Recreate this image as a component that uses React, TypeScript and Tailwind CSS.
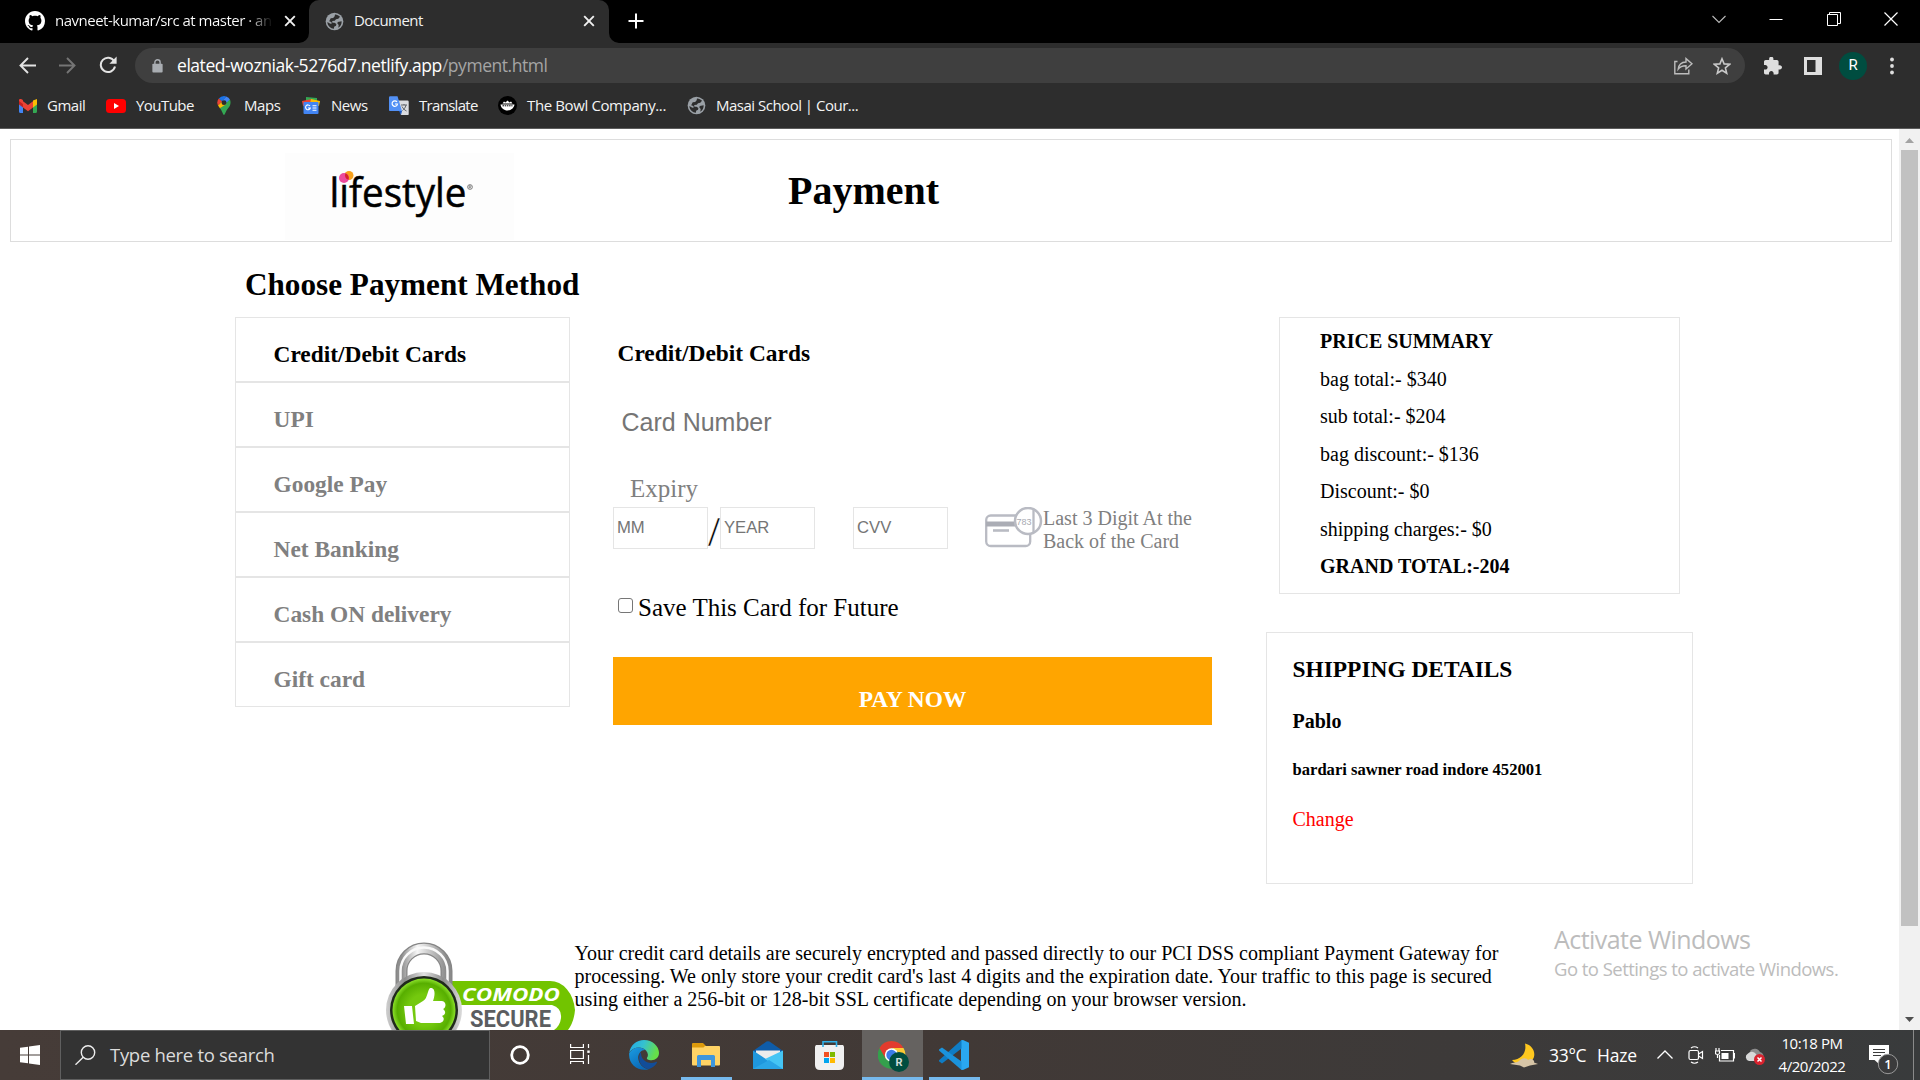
import type { ReactNode } from "react";

const ui = "font-['Open_Sans','Noto_Sans',sans-serif]";

function GlobeIcon() {
  return (
    <svg viewBox="0 0 20 20" className="h-[19px] w-[19px] shrink-0">
      <circle cx="10" cy="10" r="9.3" fill="#9aa0a6" />
      <path d="M10.5 2.6C12 2.4 14.8 3.6 15.8 5.1L14 7.2 11.6 7.6 10.3 9.2 7.6 9.6 7.8 11.4 10 11.2 12 12.6 11.6 14.6 9.6 15.6 9.4 17.6C6 17.6 2.6 14.8 2.5 10.6L5.6 12.4 7.2 12 6.6 10.4 4.4 9.8 6 6.6 8.6 6.2 10.2 4.6ZM13.4 10.4 17.5 9.8C17.8 12.4 16.4 15.2 14 16.6L14.4 13.6 13 12.2Z" fill="#2d2d2d" />
    </svg>
  );
}

function CloseX() {
  return (
    <svg viewBox="0 0 12 12" className="h-3 w-3 shrink-0" stroke="#f1f1f1" strokeWidth="1.9">
      <path d="M1.2 1.2 10.8 10.8M10.8 1.2 1.2 10.8" />
    </svg>
  );
}

function TabStrip() {
  return (
    <div className="flex h-[43px] w-full bg-black text-[15px] text-[#f1f1f1]">
      <div className="flex w-[309px] items-center pb-px pl-[25px]">
        <svg viewBox="0 0 16 16" className="h-5 w-5 shrink-0" fill="#fff">
          <path d="M8 0C3.58 0 0 3.58 0 8c0 3.54 2.29 6.53 5.47 7.59.4.07.55-.17.55-.38 0-.19-.01-.82-.01-1.49-2.01.37-2.53-.49-2.69-.94-.09-.23-.48-.94-.82-1.13-.28-.15-.68-.52-.01-.53.63-.01 1.08.58 1.23.82.72 1.21 1.87.87 2.33.66.07-.52.28-.87.51-1.07-1.78-.2-3.64-.89-3.64-3.95 0-.87.31-1.59.82-2.15-.08-.2-.36-1.02.08-2.12 0 0 .67-.21 2.2.82.64-.18 1.32-.27 2-.27s1.36.09 2 .27c1.53-1.04 2.2-.82 2.2-.82.44 1.1.16 1.92.08 2.12.51.56.82 1.27.82 2.15 0 3.07-1.87 3.75-3.65 3.95.29.25.54.73.54 1.48 0 1.07-.01 1.93-.01 2.2 0 .21.15.46.55.38A8.01 8.01 0 0 0 16 8c0-4.42-3.58-8-8-8Z" />
        </svg>
        <div className="ml-[10px] w-[218px] overflow-hidden whitespace-nowrap bg-gradient-to-r from-white from-88% to-transparent bg-clip-text pb-[2px] tracking-[-0.5px] text-transparent">
          navneet-kumar/src at master · an
        </div>
        <div className="ml-[11px]"><CloseX /></div>
      </div>
      <div className="relative flex w-[300px] items-center rounded-t-[10px] bg-[#2d2d2d] pb-px pl-4">
        <svg viewBox="0 0 10 10" className="absolute -left-[10px] bottom-0 h-[10px] w-[10px]"><path d="M10 0V10H0A10 10 0 0 0 10 0Z" fill="#2d2d2d" /></svg>
        <svg viewBox="0 0 10 10" className="absolute -right-[10px] bottom-0 h-[10px] w-[10px]"><path d="M0 0V10H10A10 10 0 0 1 0 0Z" fill="#2d2d2d" /></svg>
        <GlobeIcon />
        <div className="ml-[10px] w-[219px] pb-[2px] tracking-[-0.55px]">Document</div>
        <div className="ml-[10px]"><CloseX /></div>
      </div>
      <div className="flex flex-1 items-center pb-px pl-[19px]">
        <svg viewBox="0 0 16 16" className="h-4 w-4" stroke="#fff" strokeWidth="2"><path d="M8 .5V15.5M.5 8H15.5" /></svg>
      </div>
      <div className="flex h-[37px] w-[229px] items-center justify-between pl-[21px] pr-[22px]">
        <svg viewBox="0 0 14 14" className="h-[14px] w-[14px]" fill="none" stroke="#bbb" strokeWidth="1.1"><path d="M.5 4 7 10.500 13.500 4" /></svg>
        <svg viewBox="0 0 14 14" className="h-[14px] w-[14px]" stroke="#fff"><path d="M.5 7.500H13.500" /></svg>
        <svg viewBox="0 0 14 14" className="h-[14px] w-[14px]" fill="none" stroke="#fff"><path d="M.5 2.500H10.500V13.500H.5ZM2.500 2.500V.5H13.500V11.500H10.500" /></svg>
        <svg viewBox="0 0 14 14" className="h-[14px] w-[14px]" stroke="#fff" strokeWidth="1.2"><path d="M.5.5 13.500 13.500M13.500.5.5 13.500" /></svg>
      </div>
    </div>
  );
}

function Toolbar() {
  return (
    <div className="flex h-[45px] w-full items-center bg-[#2d2d2d]">
      <div className="flex w-[135px] items-center pb-px pl-[19px]">
        <svg viewBox="0 0 17 17" className="h-[17px] w-[17px]" fill="none" stroke="#e3e3e3" strokeWidth="1.9"><path d="M17 8.500H1.800M9 1 1.500 8.500 9 16" /></svg>
        <svg viewBox="0 0 17 17" className="ml-[23px] h-[17px] w-[17px]" fill="none" stroke="#757575" strokeWidth="1.9"><path d="M0 8.500H15.200M8 1 15.500 8.500 8 16" /></svg>
        <svg viewBox="0 0 18 18" className="ml-[23px] h-[18px] w-[18px]"><path d="M15.200 5.200A7.200 7.200 0 1 0 16 10.600" fill="none" stroke="#e3e3e3" strokeWidth="2" /><path d="M17.600.6V7.800H10.400Z" fill="#e3e3e3" /></svg>
      </div>
      <div className="flex h-[35px] w-[1610px] items-center rounded-full bg-[#3f3f3f] pl-[17px]">
        <svg viewBox="0 0 11 15" className="h-[14px] w-[11px]"><rect y="5" width="11" height="9.500" rx="1" fill="#a9adb2" /><path d="M2.700 6V3.600a2.800 2.800 0 0 1 5.600 0V6" fill="none" stroke="#a9adb2" strokeWidth="1.500" /></svg>
        <div className="ml-[14px] flex-1 whitespace-nowrap pb-[2px] text-[17.5px] leading-[24px] tracking-[-0.45px] text-white">
          elated-wozniak-5276d7.netlify.app<span className="text-[#a5a5a5]">/pyment.html</span>
        </div>
        <svg viewBox="0 0 19 18" className="h-[18px] w-[19px]" fill="none" stroke="#bdbdbd" strokeWidth="1.400"><path d="M3.500 4.500H.8V16.800H14.800V12.500M4.200 12.200C4.600 8 7.500 5.200 12 5V1.600L18 6.800 12 12V8.800C8.500 8.700 6 9.800 4.200 12.200Z" /></svg>
        <svg viewBox="0 0 18 18" className="ml-[20px] mr-[14px] h-[18px] w-[18px]" fill="none" stroke="#c8c8c8" strokeWidth="1.600"><path d="M9 1.800 11.100 6.900 16.600 7.300 12.400 10.900 13.700 16.200 9 13.300 4.300 16.200 5.600 10.900 1.400 7.300 6.900 6.900Z" /></svg>
      </div>
      <svg viewBox="2 1.5 21 21" className="ml-[19px] h-[18px] w-[18px]" fill="#dedede"><path d="M20.500 11H19V7c0-1.100-.9-2-2-2h-4V3.500C13 2.120 11.880 1 10.500 1S8 2.120 8 3.500V5H4c-1.100 0-1.990.9-1.990 2v3.800H3.500c1.490 0 2.700 1.210 2.700 2.700s-1.210 2.700-2.700 2.700H2V20c0 1.100.9 2 2 2h3.800v-1.500c0-1.490 1.210-2.700 2.700-2.700 1.490 0 2.700 1.210 2.700 2.700V22H17c1.100 0 2-.9 2-2v-4h1.500c1.380 0 2.500-1.120 2.500-2.500S21.880 11 20.500 11z" /></svg>
      <svg viewBox="0 0 18 18" className="ml-[22px] h-[18px] w-[18px]"><path fillRule="evenodd" d="M0 0H18V18H0ZM3 3V15H11.500V3Z" fill="#dedede" /></svg>
      <div className="ml-[17px] flex h-7 w-7 items-center justify-center rounded-full bg-[#004d40] font-['Roboto',sans-serif] text-[15px] text-white">R</div>
      <svg viewBox="0 0 4 18" className="ml-[23px] h-[18px] w-1" fill="#dedede"><circle cx="2" cy="2.500" r="1.900" /><circle cx="2" cy="9" r="1.900" /><circle cx="2" cy="15.500" r="1.900" /></svg>
    </div>
  );
}

const bookmarks: { label: string; box: string; icon: ReactNode }[] = [
  {
    label: "Gmail", box: "w-[87px] gap-[10px] tracking-[-0.5px]",
    icon: <svg viewBox="0 0 18 14" className="h-[14px] w-[18px]"><path d="M0 2V12.500A1.500 1.500 0 0 0 1.500 14H4V5Z" fill="#4285f4" /><path d="M18 2V12.500A1.500 1.500 0 0 1 16.500 14H14V5Z" fill="#34a853" /><path d="M14 1.500 18 0V5.500L14 8.500Z" fill="#fbbc04" /><path d="M4 1.500 0 0V5.500L4 8.500Z" fill="#c5221f" /><path d="M4 8.500V2.300L9 6 14 2.300V8.500L9 12.200ZM0 2C0 0 2-.5 3.300.6L4 1.500V5Z" fill="#ea4335" /></svg>,
  },
  {
    label: "YouTube", box: "w-[107px] gap-[10px] tracking-[-0.55px]",
    icon: <svg viewBox="0 0 20 14" className="h-[14px] w-[20px]"><rect width="20" height="14" rx="3.500" fill="red" /><path d="M8 4 13 7 8 10Z" fill="#fff" /></svg>,
  },
  {
    label: "Maps", box: "w-[89px] pl-1 gap-[13px] tracking-[-0.45px]",
    icon: <svg viewBox="0 0 14 20" className="h-[19px] w-[14px]"><path d="M7 0A7 7 0 0 0 1.500 2.700L5 5.700 9.300.4A7 7 0 0 0 7 0Z" fill="#1a73e8" /><path d="M1.500 2.700A7 7 0 0 0 .7 10L5 5.700Z" fill="#ea4335" /><path d="M9.300.4 4.900 5.600 9 9 13.300 3.800A7 7 0 0 0 9.300.4Z" fill="#4285f4" /><path d="M13.300 3.800 2.700 13C5 15.500 6 20 7 20S9 15.500 11.300 13 14.600 7 13.300 3.800Z" fill="#34a853" /><path d="M.7 10 5 5.700 9.500 8.500 2.700 13Z" fill="#fbbc04" /><circle cx="7" cy="7" r="2.600" fill="#2d2d2d" /></svg>,
  },
  {
    label: "News", box: "w-[87px] gap-[11px] tracking-[-0.45px]",
    icon: <svg viewBox="0 0 18 17" className="h-[17px] w-[18px]"><path d="M4 0 15 1V6H4Z" fill="#34a853" /><path d="M0 4 10 2 11 7 1 9Z" fill="#ea4335" /><path d="M18 4 9 2 8 7 17 9Z" fill="#fbbc04" /><rect x="1.500" y="5" width="15" height="12" rx="1" fill="#4285f4" /><path d="M8 9A2.400 2.400 0 1 0 8.300 11H6M10.500 8.800H14.500M10.500 11H14.500M10.500 13.300H14.500" stroke="#fff" strokeWidth="1.100" fill="none" /></svg>,
  },
  {
    label: "Translate", box: "w-[109px] gap-[10px] tracking-[-0.7px]",
    icon: <svg viewBox="0 0 20 19" className="h-[19px] w-[20px]"><path d="M8 4.500H18.500A1.200 1.200 0 0 1 19.700 5.700V18A1 1 0 0 1 18.500 19H12Z" fill="#dadce0" /><path d="M1.200.3H8.500L13 15H1.200A1 1 0 0 1 0 14V1.500A1.200 1.200 0 0 1 1.200.3Z" fill="#5290f5" /><path d="M10 15H13L12 19Z" fill="#1a57c0" /><path d="M8 6A2.700 2.700 0 1 0 8.500 8H6" stroke="#fff" strokeWidth="1.200" fill="none" /><path d="M12 9H18M15 8V9M17 9C16.500 12 14.500 13.500 13.500 14.500M13 10.500C14 12.500 15.500 14 17.500 15" stroke="#5f6368" fill="none" /></svg>,
  },
  {
    label: "The Bowl Company...", box: "w-[189px] gap-[10px] tracking-[-0.38px]",
    icon: <svg viewBox="0 0 19 19" className="h-[19px] w-[19px]"><circle cx="9.500" cy="9.500" r="9.500" fill="#000" /><path d="M2.500 8.500H16.500C16 12 13 14.500 9.500 14.500S3 12 2.500 8.500ZM4.500 7.500 6 5.500 7.500 6.500 9.500 4.500 11.500 6.500 13 5.500 14.500 7.500Z" fill="#fff" /><path d="M4.500 9.800H14.500" stroke="#000" strokeDasharray="1.500 .7" /></svg>,
  },
  { label: "Masai School | Cour...", box: "gap-[10px] tracking-[-0.5px]", icon: <GlobeIcon /> },
];

function BookmarkBar() {
  return (
    <div className="flex h-[41px] w-full items-center border-b border-[#5c5c5c] bg-[#2d2d2d] pb-[5px] pl-[19px] text-[15px] text-[#f4f4f4]">
      {bookmarks.map((b) => (
        <div key={b.label} className={"flex shrink-0 items-center whitespace-nowrap " + b.box}>
          <span className="shrink-0">{b.icon}</span>
          <span className="pb-px">{b.label}</span>
        </div>
      ))}
    </div>
  );
}

function LifestyleLogo() {
  return (
    <svg viewBox="0 0 229 87" className="h-[87px] w-[229px] bg-[#fdfdfd]">
      <text x="44.500" y="53.500" fontSize="40" textLength="137" lengthAdjust="spacingAndGlyphs" fontFamily="Open Sans" fill="#000" stroke="#000" strokeWidth=".5">lifestyle</text>
      <rect x="55" y="18" width="10" height="12" fill="#fdfdfd" />
      <circle cx="64" cy="22.500" r="4.500" fill="#f9a11b" />
      <circle cx="59" cy="25" r="5" fill="#ec4a9c" />
      <path d="M60.500 20.300A4.500 4.500 0 0 0 63.500 26.800 5 5 0 0 0 60.500 20.300Z" fill="#d8232a" />
      <circle cx="185" cy="34" r="2.400" fill="none" stroke="#555" strokeWidth=".7" />
      <path d="M184.200 35.500V32.700H185.200A.7.700 0 0 1 185.200 34.200H184.200M185.200 34.200 186 35.500" fill="none" stroke="#444" strokeWidth=".5" />
    </svg>
  );
}

const methods = ["Credit/Debit Cards", "UPI", "Google Pay", "Net Banking", "Cash ON delivery", "Gift card"];

function MethodList() {
  return (
    <div className="w-[335px]">
      <h2 className="ml-[10px] whitespace-nowrap text-[31.2px] font-bold leading-[34px]">Choose Payment Method</h2>
      <ul className="mt-[15px]">
        {methods.map((m, i) => (
          <li key={m} className={"h-[65px] border border-[#e5e5e5] pl-[37.5px] pt-[23px] text-[23.4px] font-bold leading-[27px] " + (i === 0 ? "text-black" : "text-[#808080]")}>
            {m}
          </li>
        ))}
      </ul>
    </div>
  );
}

function Field({ hint }: { hint: string }) {
  return (
    <input
      placeholder={hint}
      className="h-[42px] w-[95px] rounded-none border border-[#e5e5e5] px-[3px] pb-[1px] font-['Liberation_Sans',Arial,sans-serif] text-[16.67px] leading-[19px] placeholder:text-[#757575]"
    />
  );
}

function CardForm() {
  return (
    <div className="w-[599px] pt-[72px]">
      <h3 className="ml-[4.5px] text-[23.4px] font-bold leading-[27px]">Credit/Debit Cards</h3>
      <input placeholder="Card Number" className="ml-[8.5px] mt-[41px] block h-[28px] w-[400px] font-['Liberation_Sans',Arial,sans-serif] text-[25px] leading-[28px] placeholder:text-[#757575]" />
      <div className="ml-[17px] mt-[39px] text-[25px] leading-[28px] text-[#808080]">Expiry</div>
      <div className="mt-[4px] flex h-[42px]">
        <Field hint="MM" />
        <div className="flex h-[42px] w-3 justify-center pt-px text-[43px] leading-[48px] [-webkit-text-stroke:0.3px_white]">/</div>
        <Field hint="YEAR" />
        <div className="w-[38px]" />
        <Field hint="CVV" />
        <svg viewBox="0 0 58 42" className="ml-[37px] h-[42px] w-[58px]" fill="none" stroke="#b9bbc3">
          <rect x="1.200" y="8.500" width="44" height="30.500" rx="4.500" strokeWidth="2.300" />
          <path d="M1 17H33" strokeWidth="5" stroke="#abadb5" />
          <path d="M8 23.500H24" strokeWidth="2.600" />
          <circle cx="43" cy="14" r="13" fill="#fff" strokeWidth="2.500" />
          <path d="M48.500 2.500V25.500" strokeWidth="2.300" />
          <text x="31.500" y="17.500" fontSize="9" stroke="none" fill="#a8aab2" fontFamily="Liberation Sans">783</text>
        </svg>
        <div className="whitespace-nowrap text-[20px] leading-[23px] text-[#808080]">Last 3 Digit At the<br />Back of the Card</div>
      </div>
      <label className="ml-[5px] mt-[45px] flex h-[28px] items-start text-[25px] leading-[28px]">
        <span className="mr-[5px] mt-[4px] h-[15px] w-[15px] rounded-[3px] border border-[#767676] bg-white" />
        Save This Card for Future
      </label>
      <button className="mt-[35px] flex h-[68px] w-[599px] items-start justify-center bg-[#ffa500] pt-[29px] text-[23.4px] font-bold leading-[27px] text-white">PAY NOW</button>
    </div>
  );
}

function Summary() {
  return (
    <div className="w-[427px] pt-[49px]">
      <div className="ml-[13px] h-[277px] w-[401px] border border-[#e5e5e5] pl-[40px] pt-[5.4px] text-[20px] leading-[37.5px]">
        <p className="font-bold">PRICE SUMMARY</p>
        <p>bag total:- $340</p>
        <p>sub total:- $204</p>
        <p>bag discount:- $136</p>
        <p>Discount:- $0</p>
        <p>shipping charges:- $0</p>
        <p className="font-bold">GRAND TOTAL:-204</p>
      </div>
      <div className="mt-[38px] h-[252px] border border-[#e5e5e5] pl-[25.5px] pt-[23px] text-[20px] leading-[23px]">
        <h3 className="text-[23.4px] font-bold leading-[27px]">SHIPPING DETAILS</h3>
        <h4 className="mt-[27px] font-bold">Pablo</h4>
        <h5 className="mt-[27px] text-[16.6px] font-bold leading-[19px]">bardari sawner road indore 452001</h5>
        <p className="mt-[29px] text-[#f00]">Change</p>
      </div>
    </div>
  );
}

function ComodoBadge() {
  return (
    <svg viewBox="0 0 189 88" className="h-[88px] w-[189px] shrink-0">
      <defs>
        <linearGradient id="steel" x1="0" x2="1"><stop offset="0" stopColor="#8e8e8e" /><stop offset=".35" stopColor="#f6f6f6" /><stop offset=".65" stopColor="#c4c4c4" /><stop offset="1" stopColor="#8a8a8a" /></linearGradient>
        <linearGradient id="rim" x1="0" x2="1"><stop offset="0" stopColor="#cfcfcf" /><stop offset=".25" stopColor="#8d8d8d" /><stop offset=".5" stopColor="#e2e2e2" /><stop offset=".75" stopColor="#8d8d8d" /><stop offset="1" stopColor="#dcdcdc" /></linearGradient>
        <radialGradient id="leaf"><stop offset=".5" stopColor="#74c90e" /><stop offset=".85" stopColor="#57ae00" /><stop offset="1" stopColor="#8be02a" /></radialGradient>
      </defs>
      <path d="M60 39H164A25 32 0 0 1 189 68Q188 80 182 88H60Z" fill="#72c400" />
      <path d="M60 63H166Q176 66 175 76 174 84 168 88H60Z" fill="#fff" />
      <path d="M15.500 46V29A22.500 22.500 0 0 1 60.500 29V46" fill="none" stroke="#858585" strokeWidth="12" />
      <path d="M15.500 46V29A22.500 22.500 0 0 1 60.500 29V46" fill="none" stroke="url(#steel)" strokeWidth="9.500" />
      <path d="M14.500 46V29A23.500 23.500 0 0 1 61.500 29V46" fill="none" stroke="#fafafa" strokeWidth="2.500" />
      <circle cx="38" cy="68" r="38" fill="url(#rim)" />
      <circle cx="38" cy="68" r="34" fill="#202a1c" />
      <circle cx="38" cy="68" r="31.500" fill="url(#leaf)" />
      <path d="M18 64H26L28 82H20ZM29 64 37 59C42 56 41 49 44 46 50 45 49 54 47 59H56C61 60 60 66 57 67 60 69 60 73 56 74 59 76 58 80 54 81H35L30 79Z" fill="#fff" />
      <text x="76" y="58.500" fontSize="18" fontWeight="bold" fontStyle="italic" textLength="98" lengthAdjust="spacingAndGlyphs" fontFamily="Open Sans" fill="#fff">COMODO</text>
      <text x="84" y="85" fontSize="24" fontWeight="bold" textLength="81" lengthAdjust="spacingAndGlyphs" fontFamily="Roboto" fill="#5b5d60">SECURE</text>
    </svg>
  );
}

function PageBody() {
  return (
    <div className="flex h-[901px] w-full overflow-hidden bg-white font-['Liberation_Serif','Times_New_Roman',serif] text-black">
      <div className="w-[1899px]">
        <header className="ml-[10px] mt-[10px] flex h-[103px] w-[1882px] border border-[#ddd]">
          <div className="ml-[274px] mt-[13px] w-[229px]"><LifestyleLogo /></div>
          <h1 className="ml-[274px] mt-[28px] text-[40px] font-bold leading-[46px]">Payment</h1>
        </header>
        <main className="flex h-[674px] pl-[235px] pt-[26px]">
          <MethodList />
          <div className="ml-[43px]"><CardForm /></div>
          <div className="ml-[54px]"><Summary /></div>
        </main>
        <footer className="mt-[26px] flex pl-[386px]">
          <ComodoBadge />
          <p className="-ml-[0.4px] w-[940px] text-[20px] leading-[23px]">
            Your credit card details are securely encrypted and passed directly to our PCI DSS compliant Payment Gateway for<br />
            processing. We only store your credit card's last 4 digits and the expiration date. Your traffic to this page is secured<br />
            using either a 256-bit or 128-bit SSL certificate depending on your browser version.
          </p>
        </footer>
      </div>
      <div className="flex w-[21px] flex-col items-center bg-[#f1f1f1]">
        <svg viewBox="0 0 9 5" className="mt-[9px] h-[5px] w-[9px]"><path d="M0 5 4.500 0 9 5Z" fill="#a3a3a3" /></svg>
        <div className="mt-[7px] h-[776px] w-[17px] bg-[#c1c1c1]" />
        <svg viewBox="0 0 9 5" className="mt-[91px] h-[5px] w-[9px]"><path d="M0 0 4.500 5 9 0Z" fill="#505050" /></svg>
      </div>
    </div>
  );
}

function TaskCell({ box, active, children }: { box: string; active?: boolean; children: ReactNode }) {
  return (
    <div className={"relative flex h-[50px] shrink-0 items-center justify-center " + box}>
      {children}
      {active && <div className="absolute inset-x-0 bottom-0 mx-auto h-[3px] w-[51px] bg-[#76b9ed]" />}
    </div>
  );
}

function Taskbar() {
  return (
    <div className="flex h-[50px] w-full bg-gradient-to-r from-[#463c38] via-[#413936] to-[#393b3c] text-white">
      <div className="flex w-[60px] items-center justify-center">
        <svg viewBox="0 0 20 20" className="h-5 w-5" fill="#fff"><path d="M0 2.800 8 1.700V9.500H0ZM9 1.500 20 0V9.500H9ZM0 10.500H8V18.300L0 17.200ZM9 10.500H20V20L9 18.500Z" /></svg>
      </div>
      <div className="flex h-[50px] w-[430px] items-center border border-[#5f5f5f] bg-[#333] pl-[14px]">
        <svg viewBox="0 0 21 20" className="h-5 w-[21px]" fill="none" stroke="#eee" strokeWidth="1.400"><circle cx="13" cy="7.500" r="6.700" /><path d="M8.200 12.300.5 19.700" /></svg>
        <div className="ml-[14px] whitespace-nowrap pb-px text-[18.5px] tracking-[-0.3px] text-[#dcdcdc]">Type here to search</div>
      </div>
      <TaskCell box="w-[60px]"><svg viewBox="0 0 20 20" className="h-5 w-5"><circle cx="10" cy="10" r="8.300" fill="none" stroke="#fff" strokeWidth="2.800" /></svg></TaskCell>
      <TaskCell box="w-[60px] pb-0.5"><svg viewBox="0 0 20 20" className="h-5 w-5" fill="none" stroke="#fff" strokeWidth="1.200"><path d="M.6 0V3.500H13.400V0M.6 6.500H13.400V14.500H.6ZM.6 20V17.500H13.400V20M18.500 0V4M18.500 11V20" /><rect x="17.300" y="6.500" width="2.400" height="2.400" fill="#fff" stroke="none" /></svg></TaskCell>
      <TaskCell box="ml-[2px] w-[63px]">
        <svg viewBox="0 0 30 30" className="h-[30px] w-[30px]">
          <defs>
            <linearGradient id="e1" x1="0" y1="0" x2="1" y2=".3"><stop offset="0" stopColor="#1fa7e8" /><stop offset=".5" stopColor="#35c1d0" /><stop offset="1" stopColor="#66df48" /></linearGradient>
            <linearGradient id="e2" x1="0" y1="0" x2=".6" y2="1"><stop offset="0" stopColor="#1b9de2" /><stop offset="1" stopColor="#0a67b5" /></linearGradient>
          </defs>
          <path d="M.3 12.500C1.500 5 7.500 0 15 0 23.500 0 30 6.300 30 12.800 30 17.500 26.500 20.300 22.500 20.300 18.800 20.300 17.500 19 18 17.800 19.500 16 19.300 13 17 10.500 13 6 4.500 6.500.3 12.500Z" fill="url(#e1)" />
          <path d="M.2 13C3.500 7 12 5.500 16.500 10 12.500 9.500 9 13.500 9.200 18 9.500 23.500 14 28.500 19.500 29.300 9.500 32-1 24.500.2 13Z" fill="url(#e2)" />
          <path d="M12 12C8 17 10 27 19.500 29.300 23.500 28 26.500 25.500 28 22.500 28.200 21.800 27.500 21.600 27 21.900 20 25 11.500 21 12 12Z" fill="#124d99" />
        </svg>
      </TaskCell>
      <TaskCell box="w-[62px]" active>
        <svg viewBox="0 0 28 24" className="h-6 w-7"><path d="M0 1A1 1 0 0 1 1 0H11L13.500 2.500V8H0Z" fill="#dc9a0c" /><path d="M13 3H27A1 1 0 0 1 28 4V21.500A1 1 0 0 1 27 22.500H1A1 1 0 0 1 0 21.500V4.500H11.500Z" fill="#ffd365" /><path d="M5 24V13.500A1.500 1.500 0 0 1 6.500 12H21.500A1.500 1.500 0 0 1 23 13.500V24H19V17H9V24Z" fill="#3f96dc" /></svg>
      </TaskCell>
      <TaskCell box="w-[62px]">
        <svg viewBox="0 0 30 28" className="h-7 w-[30px]"><path d="M0 10 13.500.600Q15-.2 16.500.600L30 10V14H0Z" fill="#0f5ca8" /><path d="M3 9.500H27V16L15 22 3 16Z" fill="#ececec" /><path d="M0 9.500 16 20 30 28H0Z" fill="#1f97dd" /><path d="M30 9.500V28H28L12 18Z" fill="#45c5f4" /><path d="M0 28 16 19 30 28Z" fill="#2aa5e6" /></svg>
      </TaskCell>
      <TaskCell box="w-[61px]">
        <svg viewBox="0 0 29 29" className="h-[29px] w-[29px]"><path d="M0 5.500 1 4H28L29 5.500V24Q29 29 24 29H5Q0 29 0 24Z" fill="#f0f0f0" /><path d="M8 6V.800H21.500V6" fill="none" stroke="#2fb1ea" strokeWidth="1.600" /><rect x="9" y="11" width="5" height="5" fill="#f25022" /><rect x="15" y="11" width="5" height="5" fill="#7fba00" /><rect x="9" y="17" width="5" height="5" fill="#00a4ef" /><rect x="15" y="17" width="5" height="5" fill="#ffb900" /></svg>
      </TaskCell>
      <div className="relative ml-[2px] flex h-[50px] w-[61px] justify-center bg-[#656260]">
        <svg viewBox="0 0 32 32" className="ml-[3px] mt-[11px] h-8 w-8">
          <circle cx="13.500" cy="14" r="13.800" fill="#34a04c" />
          <path d="M1.500 7A13.800 13.800 0 0 1 25.500 7L13.500 7 7.500 17.500Z" fill="#e33b2e" />
          <path d="M25.500 7A13.800 13.800 0 0 1 13.500 27.800L19.500 17.500 19.500 10.500 13.500 7Z" fill="#fcc934" />
          <circle cx="13.500" cy="14" r="6.700" fill="#fff" /><circle cx="13.500" cy="14" r="5.200" fill="#3c7be8" />
          <circle cx="21" cy="21" r="10" fill="#004d40" />
          <text x="21" y="25" fontSize="11" fontWeight="bold" textAnchor="middle" fill="#cfdcd9" fontFamily="Roboto">R</text>
        </svg>
        <div className="absolute inset-x-0 bottom-0 h-[3px] bg-[#76b9ed]" />
      </div>
      <TaskCell box="w-[62px]" active>
        <svg viewBox="0 0 30 30" className="h-[30px] w-[30px]"><path d="M22 .3 24 0 30 2.800V27.200L24 30 22 29.700Z" fill="#2aa7f0" /><path d="M22.500 0V8.500L3 23.500 .3 21.500Q-.3 20.700.3 20Z" fill="#0f7cc4" /><path d="M22.500 30V21.500L3 7.500.3 9.300Q-.3 10 .3 10.800Z" fill="#1b93dc" /></svg>
      </TaskCell>
      <div className="ml-[525px] flex h-[50px] items-center">
        <svg viewBox="0 0 29 25" className="h-[25px] w-[29px]"><path d="M15 .5C26 3 28 17 17 21 11 23 5 21 2 17 11 17 17 10 15 .5Z" fill="#ffc81f" /><path d="M0 21C3 19 7 20 9 18 12 14 17 15 18 17 22 14 25 18 24 19.500L28 21 20 22.500 14 24.500 10 22.500Z" fill="#d6c4a6" /></svg>
        <div className="ml-[10px] w-[48px] pt-px text-[17.5px] tracking-[-0.3px]">33°C</div>
        <div className="w-[60px] pt-px text-[17.5px] tracking-[-0.2px]">Haze</div>
        <svg viewBox="0 0 16 9" className="-mt-[1px] h-[9px] w-4" fill="none" stroke="#fff" strokeWidth="1.300"><path d="M.5 8.500 8 1 15.500 8.500" /></svg>
        <svg viewBox="0 0 16 18" className="-mt-px ml-[15px] h-[18px] w-4" fill="none" stroke="#fff" strokeWidth="1.200"><rect x="1" y="4.500" width="9.500" height="9" rx="1.500" /><path d="M10.500 8 14.500 5.500V12.500L10.500 10M3 2Q6.500-.5 10 2M3 16Q6.500 18.500 10 16" /></svg>
        <svg viewBox="0 0 20 14" className="-mt-px ml-[11px] h-[14px] w-5" fill="none" stroke="#fff" strokeWidth="1.200"><path d="M6 2.500H18.500V13H4.500V7M18.500 5.500H19.500V10H18.500M1 0V3M4 0V3M.5 3H4.500V5Q4.500 6.500 2.500 6.500T.5 5ZM2.500 6.500V10" /><rect x="6.500" y="5" width="7" height="6" fill="#fff" stroke="none" /></svg>
        <svg viewBox="0 0 20 17" className="ml-[10px] mt-[2px] h-[17px] w-5"><path d="M5 3A6 6 0 0 1 15 4 4 4 0 0 1 17 11H8Z" fill="#8c8c8c" /><path d="M4 13A4 4 0 0 1 3 5.500 5 5 0 0 1 11 6L14 13Z" fill="#d8d8d8" /><circle cx="14.500" cy="11.500" r="5.500" fill="#d8232f" /><path d="M12.500 9.500 16.500 13.500M16.500 9.500 12.500 13.500" stroke="#fff" strokeWidth="1.500" /></svg>
        <div className="ml-[7px] w-[80px] text-center text-[15px] leading-[23px] tracking-[-0.45px]">10:18 PM<br />4/20/2022</div>
        <svg viewBox="0 0 31 32" className="ml-[17px] mt-[8px] h-8 w-[31px]"><path d="M0 2H20V17H10V21L5.500 17H0Z" fill="#fff" /><path d="M4 6.500H16M4 9.500H16M4 12.500H12" stroke="#3c3c3c" /><circle cx="19" cy="21" r="9.700" fill="#3b3b3c" stroke="#999" /><text x="19" y="26" fontSize="13" fontWeight="600" textAnchor="middle" fill="#fff" fontFamily="Open Sans">1</text></svg>
        <div className="ml-[13px] h-[50px] w-px bg-[#8a8a8a]" />
      </div>
    </div>
  );
}

export default function App() {
  return (
    <div className={"relative flex h-[1080px] w-[1920px] flex-col overflow-hidden bg-white " + ui}>
      <TabStrip />
      <Toolbar />
      <BookmarkBar />
      <PageBody />
      <Taskbar />
      <div className="pointer-events-none absolute left-[1554px] top-[923px] whitespace-nowrap text-[#bcbcbc]">
        <div className="text-[25px] leading-[32px] tracking-[-0.55px]">Activate Windows</div>
        <div className="text-[18.5px] leading-[27px] tracking-[-0.54px]">Go to Settings to activate Windows.</div>
      </div>
    </div>
  );
}
